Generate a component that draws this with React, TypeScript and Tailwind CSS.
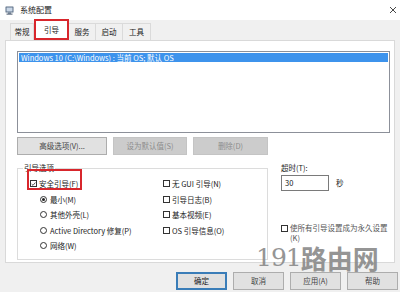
import React from "react";

function Check({ checked = false }: { checked?: boolean }) {
  return (
    <span className="w-[7px] h-[7px] border border-[#333333] bg-white flex items-center justify-center shrink-0">
      {checked && (
        <svg width="6" height="6" viewBox="0 0 6 6">
          <path d="M0.8 3.1 L2.4 4.6 L5.3 1.2" fill="none" stroke="#222" strokeWidth="0.9" />
        </svg>
      )}
    </span>
  );
}

function Radio({ checked = false }: { checked?: boolean }) {
  return (
    <span className="w-[7px] h-[7px] rounded-full border border-[#333333] bg-white flex items-center justify-center shrink-0">
      {checked && <span className="w-[3px] h-[3px] rounded-full bg-[#222]" />}
    </span>
  );
}

function Btn({ children, disabled = false, w, def = false }: { children: React.ReactNode; disabled?: boolean; w: string; def?: boolean }) {
  const base = "h-[18px] flex items-center justify-center shrink-0";
  const cls = disabled
    ? "bg-[#cccccc] border border-[#c4c4c4] text-[#8c8c8c]"
    : def
    ? "bg-[#e1e1e1] border-2 border-[#3a7db8] text-[#222]"
    : "bg-[#e1e1e1] border border-[#adadad] text-[#444]";
  return <div className={`${base} ${cls} ${w}`}>{children}</div>;
}

export default function App() {
  return (
    <div className="w-[400px] h-[292px] bg-[#f0f0f0] relative overflow-hidden text-[7.5px] leading-none text-[#1a1a1a] font-['Noto_Sans_CJK_SC','Noto_Sans',sans-serif]">
      {/* title bar */}
      <div className="h-[20px] bg-white flex items-center pl-[5px] pr-[3px]">
        <svg width="9" height="9" viewBox="0 0 9 9" className="mt-[1px]">
          <rect x="0.5" y="0.5" width="8" height="6" rx="0.5" fill="#5b6e86" />
          <rect x="1.5" y="1.5" width="6" height="4" fill="#c9d6e6" />
          <rect x="3" y="6.5" width="3" height="1.2" fill="#5b6e86" />
          <rect x="1.5" y="7.6" width="6" height="1" fill="#44546a" />
        </svg>
        <span className="ml-[6px] text-[8px]">系统配置</span>
        <svg width="8" height="8" viewBox="0 0 8 8" className="ml-auto">
          <path d="M1 1 L7 7 M7 1 L1 7" stroke="#333" strokeWidth="0.9" />
        </svg>
      </div>

      {/* tabs */}
      <div className="h-[20px] flex items-end pl-[10px]">
        <div className="h-[17px] w-[24px] flex items-center justify-center border border-b-0 border-[#dadada] bg-[#f0f0f0]">常规</div>
        <div className="h-[21px] w-[35px] flex items-center justify-center border-2 border-[#d8262c] bg-white">引导</div>
        <div className="h-[17px] w-[27px] flex items-center justify-center border border-b-0 border-l-0 border-[#dadada] bg-[#f0f0f0]">服务</div>
        <div className="h-[17px] w-[27px] flex items-center justify-center border border-b-0 border-l-0 border-[#dadada] bg-[#f0f0f0]">启动</div>
        <div className="h-[17px] w-[28px] flex items-center justify-center border border-b-0 border-l-0 border-[#dadada] bg-[#f0f0f0]">工具</div>
      </div>

      {/* panel */}
      <div className="mx-[5px] h-[223px] bg-white border border-[#d9d9d9] pl-[11px] pt-[10px]">
        <div className="w-[373px] h-[82px] border border-[#8c9099] p-[1px]">
          <div className="h-[9px] bg-[#3d93ec] text-white flex items-center pl-[2px]">
            Windows 10 (C:\Windows) : 当前 OS; 默认 OS
          </div>
        </div>

        <div className="flex gap-[6px] mt-[4px]">
          <Btn w="w-[90px]">高级选项(V)...</Btn>
          <Btn w="w-[74px]" disabled>设为默认值(S)</Btn>
          <Btn w="w-[75px]" disabled>删除(D)</Btn>
        </div>

        <div className="flex">
          <div className="relative mt-[13px] w-[251px] h-[92px] border border-[#dcdcdc] pt-[7px] pl-[12px] flex">
            <span className="absolute -top-[5px] left-[5px] bg-white px-[1px]">引导选项</span>
            <div className="absolute top-0 left-[9px] w-[55px] h-[21px] border-2 border-[#d8262c]" />
            <div className="w-[133px] flex flex-col">
              <div className="h-[15.5px] flex items-center gap-[2px]"><Check checked />安全引导(F)</div>
              <div className="h-[15.5px] flex items-center gap-[3px] pl-[10px]"><Radio checked />最小(M)</div>
              <div className="h-[15.5px] flex items-center gap-[3px] pl-[10px]"><Radio />其他外壳(L)</div>
              <div className="h-[15.5px] flex items-center gap-[3px] pl-[10px]"><Radio />Active Directory 修复(P)</div>
              <div className="h-[15.5px] flex items-center gap-[3px] pl-[10px]"><Radio />网络(W)</div>
            </div>
            <div className="flex flex-col">
              <div className="h-[15.5px] flex items-center gap-[2px]"><Check />无 GUI 引导(N)</div>
              <div className="h-[15.5px] flex items-center gap-[2px]"><Check />引导日志(B)</div>
              <div className="h-[15.5px] flex items-center gap-[2px]"><Check />基本视频(E)</div>
              <div className="h-[15.5px] flex items-center gap-[2px]"><Check />OS 引导信息(O)</div>
            </div>
          </div>

          <div className="pl-[13px] pt-[8px] flex flex-col">
            <div className="h-[9px] flex items-center">超时(T):</div>
            <div className="flex items-center mt-[3px]">
              <div className="w-[48px] h-[16px] border border-[#7a7a7a] flex items-center pl-[3px]">30</div>
              <span className="ml-[7px]">秒</span>
            </div>
            <div className="flex mt-[33px] gap-[2px]">
              <div className="mt-[1px]"><Check /></div>
              <div className="text-[#555] leading-[10px] -mt-[1px]">
                使所有引导设置成为永久设置
                <br />
                (K)
              </div>
            </div>
          </div>
        </div>
      </div>

      {/* bottom buttons */}
      <div className="flex justify-end gap-[6px] mt-[9px] pr-[2px]">
        <Btn w="w-[51px]" def>确定</Btn>
        <Btn w="w-[51px]">取消</Btn>
        <Btn w="w-[51px]">应用(A)</Btn>
        <Btn w="w-[51px]">帮助</Btn>
      </div>

      {/* watermark */}
      <div className="absolute left-[256px] top-[245px] h-[25px] flex items-center text-[#8a8a8a] opacity-90">
        <span className="text-[25px] leading-[25px] h-[25px] font-['DejaVu_Serif',serif] tracking-[-1px]">191</span>
        <span className="text-[26px] leading-[25px] h-[25px] font-bold font-['Noto_Sans_CJK_SC',sans-serif]">路由网</span>
      </div>
    </div>
  );
}
